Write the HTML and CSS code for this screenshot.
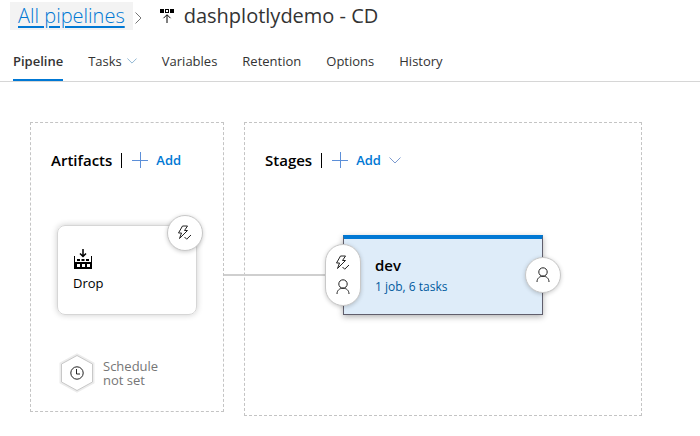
FILE: index.html
```html
<!DOCTYPE html>
<html lang="en">
<head>
<meta charset="utf-8">
<meta name="viewport" content="width=device-width, initial-scale=1">
<title>dashplotlydemo - CD</title>
<link rel="stylesheet" href="styles.css">
</head>
<body>
<svg class="sprite" aria-hidden="true">
  <symbol id="plus" viewBox="0 0 16 16"><path d="M8.5 0v16M0 8.5h16"/></symbol>
  <symbol id="chevron" viewBox="0 0 12 7"><path d="M.5.5 6 6 11.500.5"/></symbol>
  <symbol id="trigger" viewBox="0 0 16 16"><path d="M5.500 1h5L7.500 5.500h3L2.500 13.500 4.500 8H1.500L5.500 1ZM7.500 12l2.200 2.200L14 10"/></symbol>
  <symbol id="person" viewBox="0 0 14 16"><circle cx="7" cy="5" r="4.200"/><path d="M1 15c0-3.600 2.500-5.800 6-5.800s6 2.200 6 5.800"/></symbol>
</svg>

<header class="header">
  <nav class="breadcrumb" aria-label="Breadcrumb">
    <a class="breadcrumb-link" href="#">All pipelines</a>
    <svg class="breadcrumb-arrow" viewBox="0 0 7 12" aria-hidden="true"><path d="M.5.5 6 6 .5 11.500"/></svg>
    <svg class="release-icon" viewBox="0 0 15 15" aria-hidden="true"><path class="solid" fill-rule="evenodd" d="M0 0h4v4H0zM5 0h4v4H5zM6 1v2h2V1zM10 0h4v4h-4z"/><path d="M7 14V6M3.500 9.200 7 5.700l3.500 3.500"/></svg>
    <h1 class="title">dashplotlydemo - CD</h1>
  </nav>
  <nav class="tabs" aria-label="Pipeline sections">
    <a class="tab tab-active" href="#" aria-current="page">Pipeline</a>
    <a class="tab" href="#">Tasks <svg class="tab-chevron" aria-hidden="true"><use href="#chevron"/></svg></a>
    <a class="tab" href="#">Variables</a>
    <a class="tab" href="#">Retention</a>
    <a class="tab" href="#">Options</a>
    <a class="tab" href="#">History</a>
  </nav>
</header>

<main class="canvas">
  <section class="panel artifacts">
    <div class="panel-head">
      <h2 class="panel-title">Artifacts</h2>
      <button class="add" type="button"><svg class="add-plus" aria-hidden="true"><use href="#plus"/></svg>Add</button>
    </div>
    <article class="artifact">
      <svg class="build-icon" viewBox="0 0 18 20" aria-hidden="true"><path class="solid" fill-rule="evenodd" d="M0 7h1v6h16V7h1v13H0zM3 15v3h3v-3zM8 15v3h3v-3zM13 15v3h3v-3z"/><path class="solid" d="M3 10h3v2H3zM7.500 10h3v2h-3zM12 10h3v2h-3z"/><path class="build-arrow" d="M9 0v7M6 4.500l3 3 3-3"/></svg>
      <span class="artifact-name">Drop</span>
      <button class="badge artifact-trigger" type="button" aria-label="Continuous deployment trigger"><svg class="badge-icon"><use href="#trigger"/></svg></button>
    </article>
    <button class="schedule" type="button">
      <svg class="hexagon" viewBox="0 0 36 40" aria-hidden="true"><path class="hex-halo" d="M18 2.500 33.500 11v18L18 37.500 2.500 29V11Z"/><path class="hex-edge" d="M18 2.500 33.500 11v18L18 37.500 2.500 29V11Z"/><circle cx="18" cy="20" r="6.200"/><path d="M17.500 16v5h3.500"/></svg>
      <span class="schedule-text">Schedule<br>not set</span>
    </button>
  </section>

  <section class="panel stages">
    <div class="panel-head">
      <h2 class="panel-title">Stages</h2>
      <button class="add" type="button"><svg class="add-plus" aria-hidden="true"><use href="#plus"/></svg>Add<svg class="add-chevron" aria-hidden="true"><use href="#chevron"/></svg></button>
    </div>
    <div class="flow">
      <div class="connector"></div>
      <article class="stage">
        <h3 class="stage-name">dev</h3>
        <a class="stage-tasks" href="#">1 job, 6 tasks</a>
        <button class="badge stage-before" type="button" aria-label="Pre-deployment conditions"><svg class="badge-icon"><use href="#trigger"/></svg><svg class="badge-person"><use href="#person"/></svg></button>
        <button class="badge stage-after" type="button" aria-label="Post-deployment conditions"><svg class="badge-person"><use href="#person"/></svg></button>
      </article>
    </div>
  </section>
</main>
</body>
</html>
```

FILE: styles.css
```css
* {
  box-sizing: border-box;
}

body {
  margin: 0;
  background: #fff;
  color: #333;
  font: 13px/20px "Open Sans", "Noto Sans", sans-serif;
}

h1, h2, h3 {
  margin: 0;
}

button {
  padding: 0;
  border: 0;
  background: none;
  color: inherit;
  font: inherit;
  cursor: pointer;
}

a {
  color: inherit;
  text-decoration: none;
}

svg {
  flex: none;
  fill: none;
  stroke: currentColor;
}

.sprite {
  position: absolute;
  width: 0;
  height: 0;
}

.solid {
  fill: currentColor;
  stroke: none;
}

/* Header */
.header {
  border-bottom: 1px solid #d6d6d6;
}

.breadcrumb {
  display: flex;
  align-items: center;
  padding: 1px 10px 0;
}

.breadcrumb-link {
  padding: 0 8px;
  background: #f3f3f3;
  color: #0078d4;
  font-size: 20px;
  font-weight: 300;
  line-height: 28px;
  text-decoration: underline;
  text-decoration-thickness: 2px;
  text-underline-offset: 3px;
}

.breadcrumb-arrow {
  width: 7px;
  height: 12px;
  margin: 4px 18px 0 2px;
  color: #767676;
}

.release-icon {
  width: 15px;
  height: 15px;
  margin-right: 9px;
  color: #000;
}

.title {
  font-size: 20px;
  font-weight: 400;
  line-height: 30px;
}

.tabs {
  display: flex;
  gap: 25px;
  padding: 20px 13px 0;
}

.tab {
  display: flex;
  align-items: center;
  gap: 5px;
  height: 30px;
  padding-bottom: 8px;
  border-bottom: 2px solid transparent;
}

.tab-active {
  border-color: #0078d4;
  font-weight: 600;
}

.tab-chevron {
  width: 10px;
  height: 6px;
  color: #7baacb;
}

/* Canvas */
.canvas {
  display: grid;
  grid-template-columns: 194fr 398fr;
  align-items: start;
  gap: 20px;
  padding: 40px 58px 20px 30px;
}

.panel {
  padding: 26px 20px 0;
  border: 1px dashed #c4c4c4;
}

.artifacts {
  padding-bottom: 18px;
}

.stages {
  padding-bottom: 100px;
}

.panel-head {
  display: flex;
  align-items: center;
  color: #000;
}

.panel-title {
  font-size: 15px;
  font-weight: 600;
  line-height: 22px;
}

.add {
  display: flex;
  align-items: center;
  gap: 8px;
  margin-left: 9px;
  color: #0078d4;
  font-weight: 600;
}

.add::before {
  width: 1px;
  height: 15px;
  margin-right: 2px;
  background: #000;
  content: "";
}

.add-plus {
  width: 16px;
  height: 16px;
  color: #5c8fd8;
}

.add-chevron {
  width: 12px;
  height: 7px;
  color: #7d9bd0;
}

/* Shared round buttons on cards */
.badge {
  position: absolute;
  display: flex;
  flex-direction: column;
  align-items: center;
  justify-content: center;
  gap: 8px;
  width: 36px;
  height: 36px;
  border: 1px solid #c8c8c8;
  border-radius: 18px;
  background: #fff;
  box-shadow: 0 1px 4px rgba(0, 0, 0, 0.2);
  color: #222;
}

.badge-icon {
  width: 16px;
  height: 16px;
}

.badge-person {
  width: 14px;
  height: 16px;
}

/* Artifact */
.artifact {
  position: relative;
  display: flex;
  flex-direction: column;
  width: 140px;
  height: 90px;
  margin: 54px 0 0 6px;
  padding: 23px 15px 0;
  border: 1px solid #d6d6d6;
  border-radius: 8px;
  box-shadow: 0 0 6px rgba(0, 0, 0, 0.2);
  color: #000;
}

.build-icon {
  width: 18px;
  height: 20px;
  margin-left: 1px;
}

.build-arrow {
  stroke-width: 1.5px;
}

.artifact-name {
  margin-top: 4px;
}

.artifact-trigger {
  top: -11px;
  right: -7px;
}

.schedule {
  display: flex;
  align-items: center;
  gap: 8px;
  margin: 38px 0 0 8px;
  color: #767676;
  line-height: 14px;
  text-align: left;
}

.hexagon {
  width: 36px;
  height: 40px;
  color: #222;
}

.hex-halo {
  stroke: #ececec;
  stroke-width: 4px;
}

.hex-edge {
  fill: #fff;
  stroke: #c8c8c8;
}

/* Stage */
.flow {
  display: flex;
  align-items: center;
  margin-top: 64px;
}

.connector {
  flex: none;
  width: 119px;
  height: 2px;
  margin-left: -41px;
  background: #cfcfcf;
}

.stage {
  position: relative;
  flex: none;
  width: 200px;
  height: 80px;
  padding: 16px 31px 0;
  border: 1px solid #605e6c;
  border-top: 4px solid #0078d4;
  background: #deecf9;
  box-shadow: 0 2px 6px rgba(0, 0, 0, 0.3);
}

.stage-name {
  color: #000;
  font-size: 15px;
  font-weight: 600;
  line-height: 20px;
}

.stage-tasks {
  display: block;
  margin-top: 2px;
  color: #005a9e;
  font-size: 12px;
}

.stage-before {
  top: 5px;
  left: -19px;
  height: 62px;
}

.stage-after {
  top: 18px;
  right: -19px;
}
```
